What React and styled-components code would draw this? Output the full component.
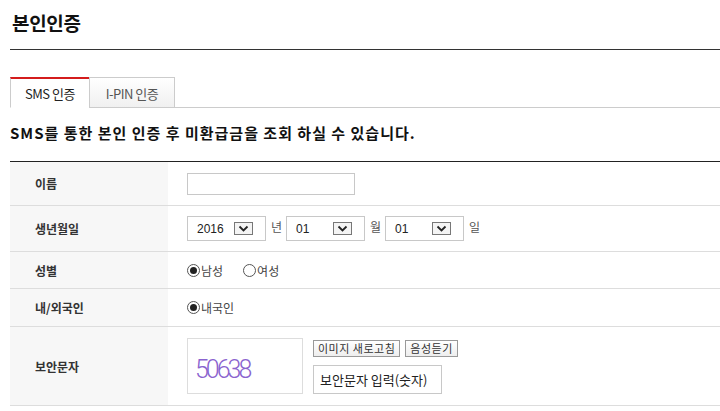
import React from "react";
import styled, { createGlobalStyle } from "styled-components";

const GlobalStyle = createGlobalStyle`
	html, body {
		margin: 0;
		padding: 0;
		background: #fff;
	}
	body {
		font-family: "Noto Sans CJK KR", "Noto Sans", sans-serif;
		color: #333;
		overflow: hidden;
	}
`;

const Page = styled.div`
	width: 720px;
	padding-left: 10px;
	box-sizing: border-box;
`;

const Header = styled.div`
	height: 50px;
	border-bottom: 1px solid #333;
	display: flex;
	align-items: center;
	padding-bottom: 4px;
	box-sizing: border-box;
`;

const Title = styled.h1`
	margin: 0 0 0 2px;
	font-size: 19px;
	font-weight: 700;
	letter-spacing: -0.3px;
	color: #111;
`;

const TabBar = styled.div`
	margin-top: 27px;
	display: flex;
	height: 30px;
	border-bottom: 1px solid #ccc;
`;

const Tab = styled.div`
	box-sizing: border-box;
	height: 31px;
	width: ${(p) => p.width}px;
	margin-bottom: -1px;
	display: flex;
	align-items: center;
	justify-content: center;
	font-size: 13px;
	letter-spacing: -0.5px;
	color: ${(p) => (p.active ? "#222" : "#555")};
	background: ${(p) =>
		p.active ? "#fff" : "linear-gradient(to bottom, #fff 0%, #f0f0f0 100%)"};
	border-top: ${(p) => (p.active ? "2px solid #d41c1c" : "1px solid #ccc")};
	border-left: 1px solid #ccc;
	border-right: ${(p) => (p.active ? "none" : "1px solid #ccc")};
	border-bottom: ${(p) => (p.active ? "1px solid #fff" : "1px solid #ccc")};
	padding-top: ${(p) => (p.active ? "0" : "1px")};
`;

const Desc = styled.p`
	margin: 0;
	height: 53px;
	display: flex;
	align-items: center;
	padding-bottom: 4px;
	box-sizing: border-box;
	font-size: 15px;
	font-weight: 700;
	color: #111;
	letter-spacing: 1px;
`;

const Table = styled.div`
	border-top: 1px solid #222;
`;

const Row = styled.div`
	display: grid;
	grid-template-columns: 158px 1fr;
	height: ${(p) => p.h}px;
	border-bottom: 1px solid #ddd;
`;

const Label = styled.div`
	background: #f7f7f7;
	display: flex;
	align-items: center;
	padding-left: 25px;
	font-size: 12px;
	font-weight: 700;
	color: #333;
`;

const Cell = styled.div`
	display: flex;
	align-items: center;
	padding-left: 19px;
	font-size: 12px;
	color: #333;
`;

const TextInput = styled.input`
	box-sizing: border-box;
	width: 168px;
	height: 22px;
	border: 1px solid #c8c8c8;
	padding: 0 5px;
	font-family: inherit;
	font-size: 12px;
	outline: none;
`;

const SelectBox = styled.div`
	box-sizing: border-box;
	width: 79px;
	height: 25px;
	border: 1px solid #c8c8c8;
	display: flex;
	align-items: center;
	justify-content: space-between;
	padding: 0 12px 0 9px;
	font-family: "Liberation Sans", sans-serif;
	font-size: 12px;
	color: #222;
`;

const ArrowButton = styled.span`
	box-sizing: border-box;
	width: 19px;
	height: 13px;
	border: 1px solid #777;
	background: #f4f4f4;
	display: flex;
	align-items: center;
	justify-content: center;
`;

const Unit = styled.span`
	font-size: 12px;
	color: #555;
	margin: 0 4px 0 5px;
	align-self: flex-start;
	padding-top: 12px;
`;

const RadioLabel = styled.label`
	display: inline-flex;
	align-items: center;
	font-size: 12px;
	color: #444;
	margin-right: 20px;
`;

const RadioMark = styled.span`
	box-sizing: border-box;
	width: 13px;
	height: 13px;
	border: 1px solid #555;
	border-radius: 50%;
	margin-right: 1px;
	display: flex;
	align-items: center;
	justify-content: center;
	&::after {
		content: "";
		width: 7px;
		height: 7px;
		border-radius: 50%;
		background: ${(p) => (p.checked ? "#222" : "transparent")};
	}
`;

const CaptchaImage = styled.div`
	box-sizing: border-box;
	width: 116px;
	height: 56px;
	border: 1px solid #ddd;
	display: flex;
	align-items: flex-end;
	padding: 0 0 11px 7px;
	font-family: "Roboto", "Liberation Sans", sans-serif;
	font-weight: 300;
	font-size: 25px;
	letter-spacing: -3px;
	color: #8a63cf;
	line-height: 1;
`;

const CaptchaSide = styled.div`
	display: flex;
	flex-direction: column;
	gap: 8px;
	margin-left: 10px;
	margin-top: 1px;
`;

const ButtonRow = styled.div`
	display: flex;
	gap: 5px;
`;

const SmallButton = styled.button`
	box-sizing: border-box;
	height: 17px;
	padding: 0 4px;
	border: 1px solid #999;
	background: linear-gradient(to bottom, #fff 0%, #eee 100%);
	font-family: inherit;
	font-size: 11px;
	letter-spacing: 0.5px;
	color: #333;
	line-height: 15px;
	cursor: pointer;
`;

const CodeInput = styled.input`
	box-sizing: border-box;
	width: 129px;
	height: 29px;
	border: 1px solid #c8c8c8;
	padding: 0 6px;
	font-family: inherit;
	font-size: 13px;
	color: #222;
	outline: none;
	&::placeholder {
		color: #222;
	}
`;

const Chevron = () => (
	<svg width="11" height="7" viewBox="0 0 11 7">
		<path d="M1.5 1.5 L5.5 5.5 L9.5 1.5" fill="none" stroke="#222" strokeWidth="1.8" />
	</svg>
);

function Select({ value }) {
	return (
		<SelectBox>
			<span>{value}</span>
			<ArrowButton>
				<Chevron />
			</ArrowButton>
		</SelectBox>
	);
}

function Radio({ checked, children }) {
	return (
		<RadioLabel>
			<RadioMark checked={checked} />
			{children}
		</RadioLabel>
	);
}

export default function App() {
	return (
		<Page>
			<GlobalStyle />
			<Header>
				<Title>본인인증</Title>
			</Header>
			<TabBar>
				<Tab active width={79}>SMS 인증</Tab>
				<Tab width={86}>I-PIN 인증</Tab>
			</TabBar>
			<Desc>SMS를 통한 본인 인증 후 미환급금을 조회 하실 수 있습니다.</Desc>
			<Table>
				<Row h={43}>
					<Label>이름</Label>
					<Cell>
						<TextInput />
					</Cell>
				</Row>
				<Row h={45}>
					<Label>생년월일</Label>
					<Cell>
						<Select value="2016" />
						<Unit>년</Unit>
						<Select value="01" />
						<Unit>월</Unit>
						<Select value="01" />
						<Unit>일</Unit>
					</Cell>
				</Row>
				<Row h={36}>
					<Label>성별</Label>
					<Cell>
						<Radio checked>남성</Radio>
						<Radio>여성</Radio>
					</Cell>
				</Row>
				<Row h={37}>
					<Label>내/외국인</Label>
					<Cell>
						<Radio checked>내국인</Radio>
					</Cell>
				</Row>
				<Row h={78}>
					<Label>보안문자</Label>
					<Cell>
						<CaptchaImage>50638</CaptchaImage>
						<CaptchaSide>
							<ButtonRow>
								<SmallButton>이미지 새로고침</SmallButton>
								<SmallButton>음성듣기</SmallButton>
							</ButtonRow>
							<CodeInput placeholder="보안문자 입력(숫자)" />
						</CaptchaSide>
					</Cell>
				</Row>
			</Table>
		</Page>
	);
}
